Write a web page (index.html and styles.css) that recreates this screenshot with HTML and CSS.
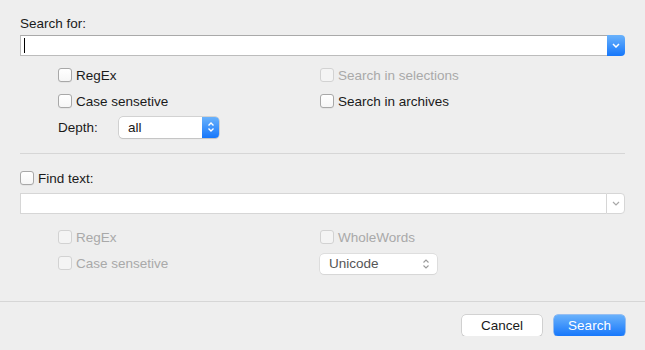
FILE: index.html
```html
<!DOCTYPE html>
<html lang="en">
<head>
  <meta charset="UTF-8" />
  <title>Search</title>
  <link rel="stylesheet" href="styles.css">
</head>
<body>

  <div class="content">
    <div class="field-label">Search for:</div>
    <div class="combo">
      <div class="combo-input"><span class="caret"></span></div>
      <div class="combo-btn">
        <svg width="8" height="5" viewBox="0 0 8 5"><path d="M1 1 L4 4 L7 1" fill="none" stroke="#fff" stroke-width="1.5"/></svg>
      </div>
    </div>

    <div class="options">
      <label class="check"><span class="box"></span>RegEx</label>
      <label class="check disabled"><span class="box"></span>Search in selections</label>
      <label class="check"><span class="box"></span>Case sensetive</label>
      <label class="check"><span class="box"></span>Search in archives</label>
      <div class="depth">
        <span class="depth-label">Depth:</span>
        <div class="popup">
          <span class="popup-text">all</span>
          <span class="popup-btn">
            <svg width="8" height="12" viewBox="0 0 8 12"><path d="M1.5 4.5 L4 2 L6.5 4.5 M1.5 7.5 L4 10 L6.5 7.5" fill="none" stroke="#fff" stroke-width="1.4"/></svg>
          </span>
        </div>
      </div>
    </div>

    <div class="sep"></div>

    <label class="check find"><span class="box"></span>Find text:</label>
    <div class="combo off">
      <div class="combo-input"></div>
      <div class="combo-btn">
        <svg width="8" height="5" viewBox="0 0 8 5"><path d="M1 1 L4 4 L7 1" fill="none" stroke="#a8a8a8" stroke-width="1.2"/></svg>
      </div>
    </div>

    <div class="options lower">
      <label class="check disabled"><span class="box"></span>RegEx</label>
      <label class="check disabled"><span class="box"></span>WholeWords</label>
      <label class="check disabled"><span class="box"></span>Case sensetive</label>
      <div class="popup off">
        <span class="popup-text">Unicode</span>
        <span class="popup-btn">
          <svg width="8" height="12" viewBox="0 0 8 12"><path d="M1.5 4.5 L4 2 L6.5 4.5 M1.5 7.5 L4 10 L6.5 7.5" fill="none" stroke="#9a9a9a" stroke-width="1.1"/></svg>
        </span>
      </div>
    </div>
  </div>

  <div class="footer">
    <button class="btn">Cancel</button>
    <button class="btn primary">Search</button>
  </div>

</body>
</html>
```

FILE: styles.css
```css
body {
  margin: 0;
  font-family: 'Liberation Sans', Arial, sans-serif;
  font-size: 13.5px;
  background-color: #eeeeee;
  color: #1a1a1a;
}

.content {
  padding: 16px 20px 0;
}

.field-label {
  height: 16px;
  line-height: 16px;
  margin-bottom: 3px;
}

.combo {
  display: flex;
  height: 21px;
}

.combo-input {
  flex: 1;
  background: #fff;
  border: 1px solid #bcbcbc;
  border-top-color: #a9a9a9;
  border-right: none;
  display: flex;
  align-items: center;
  padding-left: 3px;
}

.caret {
  width: 1px;
  height: 15px;
  background: #000;
}

.combo-btn {
  width: 18px;
  border-radius: 0 4px 4px 0;
  background: linear-gradient(#6ab2fb, #1677fb);
  display: flex;
  align-items: center;
  justify-content: center;
}

.combo.off .combo-input {
  border-color: #d6d6d6;
}

.combo.off .combo-btn {
  background: #fff;
  border: 1px solid #d6d6d6;
  width: 17px;
}

.options {
  margin: 8px 0 0 38px;
  display: grid;
  grid-template-columns: 262px 1fr;
  grid-auto-rows: 22px;
  row-gap: 4px;
}

.options.lower {
  margin-top: 12px;
}

.check {
  display: flex;
  align-items: center;
  gap: 4px;
  white-space: nowrap;
}

.box {
  width: 12px;
  height: 12px;
  border: 1px solid #a8a8a8;
  border-radius: 3px;
  background: linear-gradient(#fff, #f6f6f6);
  box-shadow: 0 0.5px 0 rgba(0, 0, 0, 0.08);
}

.check.disabled {
  color: #a9a9a9;
}

.check.disabled .box {
  border-color: #d2d2d2;
  background: #f4f4f4;
  box-shadow: none;
}

.check.find {
  height: 22px;
  margin: 13px 0 4px;
}

.depth {
  display: flex;
  align-items: center;
}

.depth-label {
  width: 61px;
}

.popup {
  width: 100px;
  height: 21px;
  box-sizing: border-box;
  display: flex;
  background: #fff;
  border-radius: 4px;
  box-shadow: 0 0 0 0.5px #b5b5b5, 0 1px 1px rgba(0, 0, 0, 0.12);
}

.popup-text {
  flex: 1;
  padding-left: 9px;
  line-height: 21px;
}

.popup-btn {
  width: 17px;
  border-radius: 0 4px 4px 0;
  background: linear-gradient(#6ab2fb, #1677fb);
  display: flex;
  align-items: center;
  justify-content: center;
}

.popup.off {
  width: 117px;
  height: 20px;
  align-self: center;
  margin-top: 2px;
  box-shadow: 0 0 0 0.5px #cdcdcd, 0 1px 1px rgba(0, 0, 0, 0.06);
}

.popup.off .popup-text {
  line-height: 20px;
  color: #555;
}

.popup.off .popup-btn {
  background: none;
  width: 22px;
}

.sep {
  height: 1px;
  background: #d6d6d6;
  margin-top: 15px;
}

.footer {
  margin-top: 27px;
  border-top: 1px solid #d6d6d6;
  padding: 13px 20px 0;
  display: flex;
  justify-content: flex-end;
  gap: 12px;
}

.btn {
  height: 21px;
  width: 80px;
  font-family: 'Liberation Sans', Arial, sans-serif;
  font-size: 13.5px;
  color: #1a1a1a;
  background: #fff;
  border: none;
  border-radius: 4px;
  box-shadow: 0 0 0 0.5px #b5b5b5, 0 1px 1px rgba(0, 0, 0, 0.15);
  padding: 0;
}

.btn.primary {
  width: 71px;
  color: #fff;
  background: linear-gradient(#69b1fb, #1677fb);
  box-shadow: 0 0 0 0.5px #3f8ef5, 0 1px 1px rgba(0, 0, 0, 0.12);
}
```
